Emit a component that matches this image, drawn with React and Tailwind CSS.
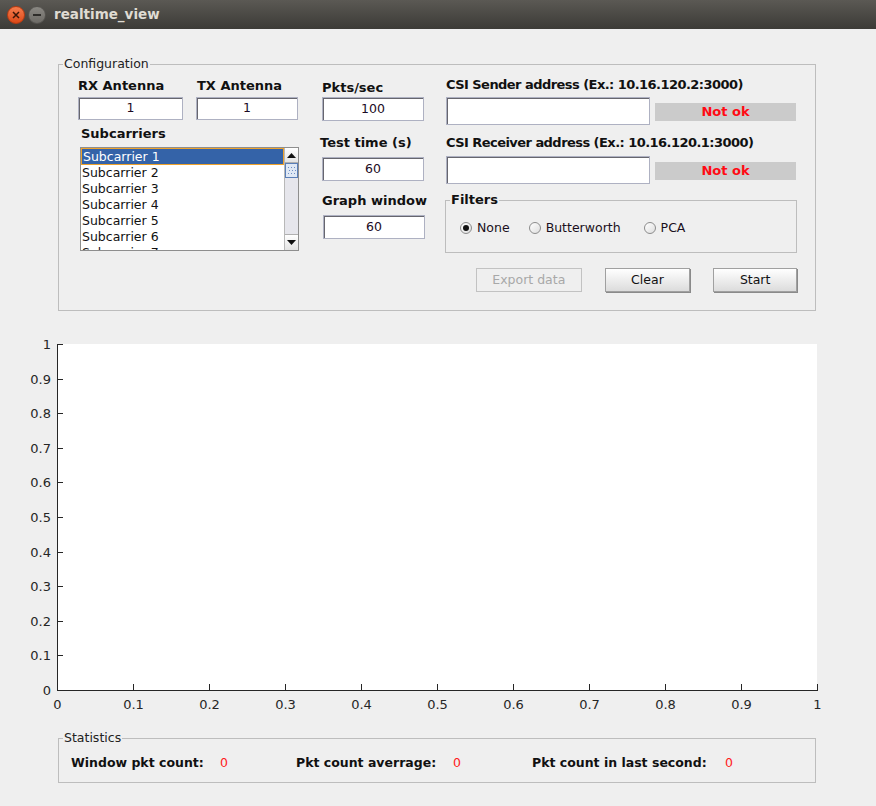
import React from 'react';

const font = { fontFamily: '"DejaVu Sans", sans-serif' };

const subcarriers = [1, 2, 3, 4, 5, 6, 7];

function Field({ value, className }) {
  return (
    <div
      className={`bg-white border border-[#aeb1c2] shadow-[inset_1px_1px_0_#66666e] flex items-center justify-center text-[12.5px] text-[#1c0a24] ${className}`}
    >
      {value}
    </div>
  );
}

function Label({ children, className = '' }) {
  return <div className={`font-bold text-[13px] leading-[16px] text-[#111] whitespace-nowrap ${className}`}>{children}</div>;
}

function NotOk() {
  return (
    <div className="ml-[5px] mt-[6px] w-[141px] h-[18px] bg-[#cbcbcb] flex items-center justify-center font-bold text-[13px] text-[#ff0a14]">
      Not ok
    </div>
  );
}

function Radio({ checked, label, className = '' }) {
  return (
    <div className={`flex items-center ${className}`}>
      <span className="w-[12px] h-[12px] rounded-full border border-[#8c8c8c] bg-gradient-to-br from-white to-[#dedede] flex items-center justify-center">
        {checked && <span className="w-[6px] h-[6px] rounded-full bg-[#111]" />}
      </span>
      <span className="ml-[5px] text-[12.5px] leading-[16px] text-[#1a1020]">{label}</span>
    </div>
  );
}

function Button({ children, disabled, className = '' }) {
  return (
    <div
      className={`h-[24px] flex items-center justify-center text-[12.5px] border ${
        disabled
          ? 'border-[#c2c2c2] text-[#a8a8a8] bg-[#efefef]'
          : 'border-[#a0a0a0] text-[#111] bg-gradient-to-b from-white to-[#dcdcdc] shadow-[1px_1px_0_#8a8a8a]'
      } ${className}`}
    >
      {children}
    </div>
  );
}

function Listbox() {
  return (
    <div className="ml-[2px] mt-[5px] w-[219px] h-[104px] border border-[#8e8e8e] bg-white flex overflow-hidden">
      <div className="flex-1 overflow-hidden">
        {subcarriers.map((n, i) => (
          <div
            key={n}
            className={`pl-[1px] text-[12.5px] whitespace-nowrap ${
              i === 0
                ? 'h-[17px] leading-[15px] bg-[#3463a8] text-white border border-[#eea22c]'
                : 'h-[16px] leading-[16px] text-[#111]'
            }`}
          >
            Subcarrier {n}
          </div>
        ))}
      </div>
      <div className="w-[14px] flex flex-col bg-[#e6e6ec] border-l border-[#b8b8b8]">
        <div className="h-[15px] bg-gradient-to-b from-white to-[#e4e4e4] border-b border-[#b0b0b0] flex items-center justify-center">
          <svg width="9" height="5" viewBox="0 0 9 5"><path d="M0 5 L4.5 0 L9 5 Z" fill="#111" /></svg>
        </div>
        <div className="h-[15px] bg-[#dfe8f5] border border-[#5a7fb8] flex items-center justify-center">
          <svg width="10" height="9" viewBox="0 0 10 9">
            {[[1, 1], [4, 1], [7, 1], [2, 4], [5, 4], [8, 4], [1, 7], [4, 7], [7, 7]].map(([x, y]) => (
              <rect key={`${x}-${y}`} x={x} y={y} width="1" height="1" fill="#6f8fc4" />
            ))}
          </svg>
        </div>
        <div className="flex-1" />
        <div className="h-[16px] bg-gradient-to-b from-white to-[#e4e4e4] border-t border-[#b0b0b0] flex items-center justify-center">
          <svg width="9" height="5" viewBox="0 0 9 5"><path d="M0 0 L4.5 5 L9 0 Z" fill="#111" /></svg>
        </div>
      </div>
    </div>
  );
}

function Chart() {
  const yTicks = Array.from({ length: 11 }, (_, i) => i);
  const xTicks = Array.from({ length: 11 }, (_, i) => i);
  const fmt = (i) => (i === 0 ? '0' : i === 10 ? '1' : `0.${i}`);
  return (
    <svg width="876" height="419" viewBox="0 311 876 419" className="block" style={font}>
      <rect x="57" y="344" width="760" height="346" fill="#fff" />
      <line x1="57.5" y1="344" x2="57.5" y2="691" stroke="#262626" strokeWidth="1" />
      <line x1="57" y1="690.5" x2="818" y2="690.5" stroke="#262626" strokeWidth="1" />
      {yTicks.map((i) => {
        const y = Math.round(690 - i * 34.6) + 0.5;
        return (
          <g key={`y${i}`}>
            <line x1="57" y1={y} x2="63" y2={y} stroke="#262626" />
            <text x="51" y={y + 4.5} textAnchor="end" fontSize="13" fill="#262626">{fmt(i)}</text>
          </g>
        );
      })}
      {xTicks.map((i) => {
        const x = 57 + i * 76 + 0.5;
        return (
          <g key={`x${i}`}>
            <line x1={x} y1="690" x2={x} y2="684" stroke="#262626" />
            <text x={x} y="709" textAnchor="middle" fontSize="13" fill="#262626">{fmt(i)}</text>
          </g>
        );
      })}
    </svg>
  );
}

export default function App() {
  return (
    <div className="w-[876px] h-[806px] bg-[#efefef] overflow-hidden flex flex-col" style={font}>
      <div className="h-[29px] bg-gradient-to-b from-[#5b5954] to-[#3c3b37] flex items-center">
        <div className="ml-[7px] w-[18px] h-[18px] rounded-full bg-gradient-to-b from-[#f57c4c] to-[#dd4814] border border-[#b93a10] flex items-center justify-center">
          <svg width="8" height="8" viewBox="0 0 8 8"><path d="M1 1 L7 7 M7 1 L1 7" stroke="#3b1608" strokeWidth="1.5" /></svg>
        </div>
        <div className="ml-[3px] w-[18px] h-[18px] rounded-full bg-gradient-to-b from-[#8a8883] to-[#6d6b66] border border-[#55534f] flex items-center justify-center">
          <div className="w-[8px] h-[2px] bg-[#2e2d2a]" />
        </div>
        <div className="ml-[8px] font-bold text-[13.5px] text-[#dfdbd2]">realtime_view</div>
      </div>

      <fieldset className="ml-[58px] mt-[27px] w-[758px] h-[255px] border border-[#bdbdbd]">
        <legend className="ml-[4px] px-[1px] text-[12.5px] leading-[16px] text-[#222]">Configuration</legend>
        <div className="flex items-start">
          <div className="ml-[19px] w-[220px] flex flex-col">
            <div className="flex">
              <div className="w-[105px]">
                <Label className="mt-[6px]">RX Antenna</Label>
                <Field value="1" className="mt-[3px] w-[105px] h-[23px]" />
              </div>
              <div className="ml-[13px] w-[102px]">
                <Label className="mt-[6px] pl-[1px]">TX Antenna</Label>
                <Field value="1" className="mt-[3px] w-[102px] h-[23px]" />
              </div>
            </div>
            <Label className="mt-[6px] pl-[3px]">Subcarriers</Label>
            <Listbox />
          </div>

          <div className="ml-[22px] w-[105px] flex flex-col">
            <Label className="mt-[8px] pl-[2px]">Pkts/sec</Label>
            <Field value="100" className="ml-[2px] mt-[1px] w-[102px] h-[24px]" />
            <Label className="mt-[14px]">Test time (s)</Label>
            <Field value="60" className="ml-[2px] mt-[6px] w-[102px] h-[24px]" />
            <Label className="mt-[12px] pl-[2px]">Graph window</Label>
            <Field value="60" className="ml-[3px] mt-[6px] w-[102px] h-[24px]" />
          </div>

          <div className="ml-[20px] w-[352px] flex flex-col">
            <Label className="mt-[5px] pl-[1px] tracking-[-0.55px]">CSI Sender address (Ex.: 10.16.120.2:3000)</Label>
            <div className="flex items-start mt-[4px]">
              <Field value="" className="ml-[1px] w-[204px] h-[28px]" />
              <NotOk />
            </div>
            <Label className="mt-[10px] pl-[1px] tracking-[-0.55px]">CSI Receiver address (Ex.: 10.16.120.1:3000)</Label>
            <div className="flex items-start mt-[5px]">
              <Field value="" className="ml-[1px] w-[204px] h-[28px]" />
              <NotOk />
            </div>
            <fieldset className="mt-[8px] w-[352px] h-[61px] border border-[#bdbdbd]">
              <legend className="ml-[4px] px-[1px] font-bold text-[13px] leading-[16px] text-[#111]">Filters</legend>
              <div className="mt-[12px] flex items-center">
                <Radio checked label="None" className="ml-[14px]" />
                <Radio label="Butterworth" className="ml-[19px]" />
                <Radio label="PCA" className="ml-[23px]" />
              </div>
            </fieldset>
            <div className="flex mt-[15px]">
              <Button disabled className="ml-[31px] w-[106px]">Export data</Button>
              <Button className="ml-[23px] w-[86px]">Clear</Button>
              <Button className="ml-[23px] w-[84px]">Start</Button>
            </div>
          </div>
        </div>
      </fieldset>

      <Chart />

      <fieldset className="ml-[58px] w-[758px] h-[53px] border border-[#bdbdbd]">
        <legend className="ml-[4px] px-[1px] text-[12.5px] leading-[16px] text-[#222]">Statistics</legend>
        <div className="mt-[9px] flex items-center text-[12.5px] leading-[16px]">
          <span className="ml-[12px] w-[149px] font-bold text-[#111]">Window pkt count:</span>
          <span className="w-[76px] text-[#ff1a1a]">0</span>
          <span className="w-[157px] font-bold text-[#111]">Pkt count averrage:</span>
          <span className="w-[79px] text-[#ff1a1a]">0</span>
          <span className="w-[193px] font-bold text-[#111]">Pkt count in last second:</span>
          <span className="text-[#ff1a1a]">0</span>
        </div>
      </fieldset>
    </div>
  );
}
